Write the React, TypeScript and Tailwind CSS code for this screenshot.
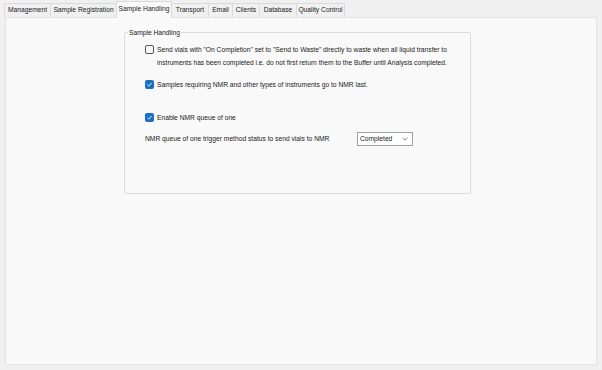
import { ReactNode } from "react";

const tabs = [
  { name: "Management", w: 47 },
  { name: "Sample Registration", w: 67 },
  { name: "Sample Handling", w: 56 },
  { name: "Transport", w: 38 },
  { name: "Email", w: 25 },
  { name: "Clients", w: 28 },
  { name: "Database", w: 38 },
  { name: "Quality Control", w: 49 },
];

const Check = ({ checked }: { checked?: boolean }) =>
  checked ? (
    <span className="flex h-[9px] w-[9px] shrink-0 items-center justify-center rounded-[2px] bg-[#1a6fc4]">
      <svg width="7" height="7" viewBox="0 0 8 8" fill="none">
        <path d="M1.5 4.2 L3.2 5.8 L6.5 2.2" stroke="white" strokeWidth="1" />
      </svg>
    </span>
  ) : (
    <span className="block h-[9px] w-[9px] shrink-0 rounded-[2px] border border-[#555] bg-[#f9f9f9]" />
  );

const Option = ({ checked, children }: { checked?: boolean; children: ReactNode }) => (
  <div className="flex items-start gap-[3px]">
    <div className="shrink-0">
      <Check checked={checked} />
    </div>
    <div className="-mt-[2px] leading-[13px]">{children}</div>
  </div>
);

const App = () => {
  return (
    <div
      className="flex h-[370px] w-[602px] flex-col bg-[#f0f0f0] text-[6.7px] text-[#1a1a1a]"
      style={{ fontFamily: '"Liberation Sans", Arial, sans-serif' }}>
      {/* Tab strip */}
      <div className="flex h-[17px] items-end pl-[5px]">
        {tabs.map((tab) => {
          const active = tab.name === "Sample Handling";
          return (
            <div
              key={tab.name}
              style={{ width: tab.w }}
              className={`flex items-center justify-center border border-b-0 border-[#dadada] ${
                active
                  ? "relative z-10 -mb-[1px] -ml-[1px] h-[17px] bg-[#f9f9f9] pb-[1px]"
                  : "-ml-[1px] h-[14px] bg-[#f0f0f0]"
              }`}>
              {tab.name}
            </div>
          );
        })}
      </div>

      {/* Tab page */}
      <div className="mx-[5px] mb-[5px] flex-1 border border-[#e3e3e3] bg-[#f9f9f9] pl-[118px] pt-[10px]">
        <fieldset className="h-[166px] w-[347px] rounded-[2px] border border-[#dcdcdc] pl-[20px] pr-[6px]">
          <legend className="ml-[-17px] px-[1px] leading-[9px]">Sample Handling</legend>
          <div className="flex flex-col pt-[8px]">
            <Option>
              Send vials with "On Completion" set to "Send to Waste" directly to waste when all liquid transfer to
              <br />
              instruments has been completed i.e. do not first return them to the Buffer until Analysis completed.
            </Option>
            <div className="mt-[11px]">
              <Option checked>Samples requiring NMR and other types of instruments go to NMR last.</Option>
            </div>
            <div className="mt-[22px]">
              <Option checked>Enable NMR queue of one</Option>
            </div>
            <div className="mt-[8px] flex items-center">
              <span className="w-[212px]">NMR queue of one trigger method status to send vials to NMR</span>
              <div className="flex h-[14px] w-[56px] items-center justify-between border border-[#a0a0a0] bg-white pl-[2px] pr-[4px]">
                <span>Completed</span>
                <svg width="6" height="4" viewBox="0 0 6 4" fill="none">
                  <path d="M0.5 0.8 L3 3.2 L5.5 0.8" stroke="#666" strokeWidth="0.8" />
                </svg>
              </div>
            </div>
          </div>
        </fieldset>
      </div>
    </div>
  );
};

export default App;
